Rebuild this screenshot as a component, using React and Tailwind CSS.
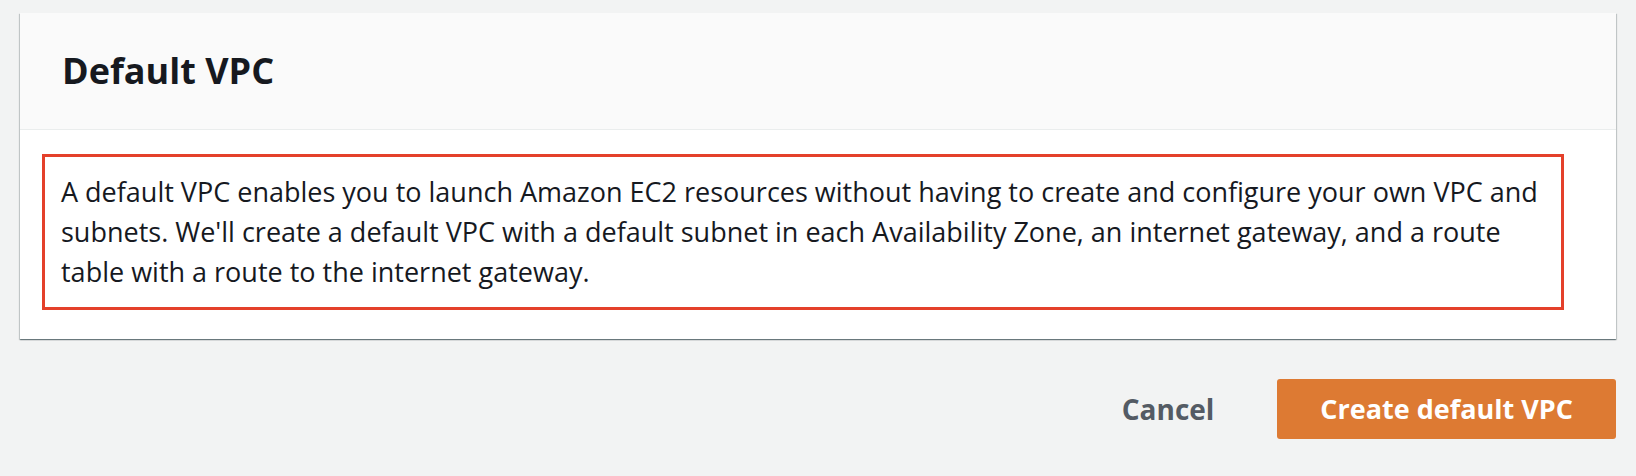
export default function App() {
  return (
    <div
      className="min-h-[476px] bg-[#f2f3f3] px-5 pt-[13px]"
      style={{ fontFamily: '"Open Sans", "Liberation Sans", sans-serif' }}
    >
      <div className="bg-white shadow-[0_1px_1px_0_rgba(0,28,36,0.4),1px_1px_1px_0_rgba(0,28,36,0.15),-1px_1px_1px_0_rgba(0,28,36,0.15)]">
        <div className="flex h-[117px] items-center border-b border-[#eaeded] bg-[#fafafa] px-[42px]">
          <h2 className="text-[36px] font-bold text-[#16191f]">Default VPC</h2>
        </div>
        <div className="pt-6 pb-[29px] pl-[22px] pr-[52px]">
          <div className="border-[3px] border-[#e4402a] px-4 py-[15px]">
            <p className="text-[27px] leading-[40px] text-[#16191f]">
              A default VPC enables you to launch Amazon EC2 resources without having to create and configure your own VPC and
              <br />
              subnets. We'll create a default VPC with a default subnet in each Availability Zone, an internet gateway, and a route
              <br />
              table with a route to the internet gateway.
            </p>
          </div>
        </div>
      </div>
      <div className="mt-10 flex items-center justify-end gap-[63px]">
        <button className="text-[28px] font-bold text-[#545b64]">Cancel</button>
        <button className="h-[60px] rounded-[3px] bg-[#dd7a33] px-[43px] text-[27px] font-bold text-white">
          Create default VPC
        </button>
      </div>
    </div>
  );
}
